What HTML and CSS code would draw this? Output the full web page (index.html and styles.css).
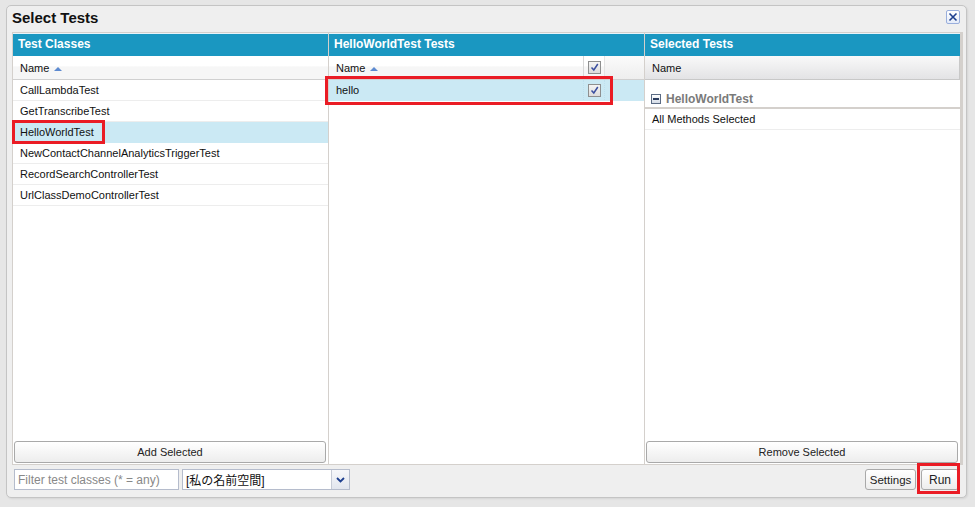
FILE: index.html
```html
<!DOCTYPE html>
<html>
<head>
<meta charset="utf-8">
<link rel="stylesheet" href="styles.css">
</head>
<body>
<div class="dialog">
  <div class="titlebar">
    <span class="title">Select Tests</span>
    <span class="close"><svg width="10" height="10" viewBox="0 0 10 10"><path d="M1.5 1.5 L8.5 8.5 M8.5 1.5 L1.5 8.5" stroke="#1d3f8f" stroke-width="1.6" fill="none"/></svg></span>
  </div>
  <div class="panels">
    <div class="panel">
      <div class="phead">Test Classes</div>
      <div class="colhead plain"><span class="colname">Name <span class="sort"></span></span></div>
      <div class="rows">
        <div class="row">CallLambdaTest</div>
        <div class="row">GetTranscribeTest</div>
        <div class="row sel">HelloWorldTest</div>
        <div class="row">NewContactChannelAnalyticsTriggerTest</div>
        <div class="row">RecordSearchControllerTest</div>
        <div class="row">UrlClassDemoControllerTest</div>
      </div>
      <div class="pfoot"><button class="btn wide">Add Selected</button></div>
    </div>
    <div class="panel">
      <div class="phead">HelloWorldTest Tests</div>
      <div class="colhead plain split">
        <span class="colname grow">Name <span class="sort"></span></span>
        <span class="chkcol"><span class="chk"><svg width="9" height="9" viewBox="0 0 9 9"><path d="M1.5 4.5 L3.8 7 L7.8 1" stroke="#3a4fa0" stroke-width="1.5" fill="none"/></svg></span></span>
        <span class="filler"></span>
      </div>
      <div class="rows">
        <div class="row sel split"><span class="grow">hello</span><span class="chkcol"><span class="chk"><svg width="9" height="9" viewBox="0 0 9 9"><path d="M1.5 4.5 L3.8 7 L7.8 1" stroke="#3a4fa0" stroke-width="1.5" fill="none"/></svg></span></span><span class="filler sel"></span></div>
      </div>
    </div>
    <div class="panel">
      <div class="phead">Selected Tests</div>
      <div class="colhead grad"><span class="colname">Name</span></div>
      <div class="rows">
        <div class="group"><span class="minus"></span>HelloWorldTest</div>
        <div class="row">All Methods Selected</div>
      </div>
      <div class="pfoot"><button class="btn wide">Remove Selected</button></div>
    </div>
  </div>
  <div class="toolbar">
    <input class="filter" type="text" placeholder="Filter test classes (* = any)">
    <div class="combo"><span class="combotext">[私の名前空間]</span><span class="trigger"><svg width="9" height="6" viewBox="0 0 9 6"><path d="M1 1 L4.5 4.5 L8 1" stroke="#1d3f8f" stroke-width="1.8" fill="none"/></svg></span></div>
    <span class="spacer"></span>
    <button class="btn small settings">Settings</button>
    <button class="btn small run">Run</button>
  </div>
</div>
<div class="mark m1"></div>
<div class="mark m2"></div>
<div class="mark m3"></div>
</body>
</html>
```
FILE: styles.css
```css
html, body { margin: 0; padding: 0; }
body {
  background: #e6e6e6;
  font-family: "Liberation Sans", Arial, "Noto Sans CJK JP", sans-serif;
  font-size: 11px;
  color: #111;
  width: 975px;
  height: 507px;
  position: relative;
  overflow: hidden;
}
.dialog {
  position: absolute;
  left: 6px;
  top: 5px;
  width: 959px;
  height: 491px;
  border: 1px solid #c4c4c4;
  border-radius: 5px;
  background: #efefef;
  box-shadow: 1px 1px 2px rgba(0,0,0,0.08);
  display: flex;
  flex-direction: column;
}
.titlebar {
  height: 26px;
  box-sizing: border-box;
  display: flex;
  align-items: flex-start;
  padding: 3px 6px 0 5px;
}
.title {
  flex: 1;
  font-weight: bold;
  font-size: 15px;
  line-height: 18px;
  color: #111;
}
.close {
  width: 12px;
  height: 12px;
  border: 1px solid #99aedc;
  border-radius: 2px;
  background: linear-gradient(#ffffff, #e4ebf8);
  display: flex;
  align-items: center;
  justify-content: center;
  margin-top: 1px;
}
.panels {
  margin-left: 5px;
  width: 951px;
  height: 433px;
  box-sizing: border-box;
  background: #d4d0cc;
  padding: 1px 3px 1px 1px;
  display: flex;
  gap: 1px;
}
.panel {
  width: 315px;
  background: #fff;
  display: flex;
  flex-direction: column;
}
.phead {
  height: 23px;
  background: #1a97c1;
  border-top: 1px solid #e8f4fa;
  box-sizing: border-box;
  color: #fff;
  font-weight: bold;
  font-size: 12px;
  line-height: 21px;
  padding-left: 5px;
}
.colhead {
  height: 24px;
  box-sizing: border-box;
  border-bottom: 1px solid #d0d0d0;
  display: flex;
  align-items: center;
  padding-left: 7px;
}
.colhead.plain { background: linear-gradient(#ffffff 0%, #ffffff 45%, #f6f6f6 46%, #f6f6f6 100%); }
.colhead.grad {
  background: linear-gradient(#f9f9f9, #e3e3e5);
  border-bottom: 1px solid #c8c8c8;
  border-right: 1px solid #c8c8c8;
}
.sort {
  display: inline-block;
  width: 0; height: 0;
  border-left: 4px solid transparent;
  border-right: 4px solid transparent;
  border-bottom: 4px solid #5d8ad0;
  margin-left: 2px;
  vertical-align: 1px;
}
.split { padding-right: 0; }
.grow { flex: 1; }
.chkcol {
  width: 20px;
  height: 100%;
  border-left: 1px solid #d8d8d8;
  display: flex;
  align-items: center;
  justify-content: center;
}
.filler {
  width: 40px;
  height: 100%;
  box-sizing: border-box;
  border-left: 1px solid #e4e4e4;
  background: linear-gradient(#fbfbfb, #eeeeee);
}
.filler.sel { background: #cbe9f4; border-left: 1px dotted #bfe0ee; }
.chk {
  width: 11px;
  height: 11px;
  border: 1px solid #8e8f8f;
  background: linear-gradient(#f4f4f4, #dcdcdc);
  display: flex;
  align-items: center;
  justify-content: center;
}
.rows { flex: 1; }
.row {
  height: 21px;
  box-sizing: border-box;
  border-bottom: 1px solid #ededed;
  line-height: 20px;
  padding-left: 7px;
  display: flex;
  align-items: center;
}
.row.sel { background: #cbe9f4; border-bottom-color: #cbe9f4; }
.row.sel .chkcol { border-left: 1px dotted #bfe0ee; }
.group {
  height: 29px;
  box-sizing: border-box;
  border-bottom: 2px solid #d4d0cc;
  padding: 10px 0 0 6px;
  font-weight: bold;
  font-size: 12px;
  color: #7a7a7a;
  display: flex;
  align-items: center;
}
.minus {
  width: 8px;
  height: 8px;
  border: 1px solid #5b6b84;
  background: linear-gradient(#ffffff, #d4dbe6);
  margin-right: 5px;
  position: relative;
}
.minus::after {
  content: "";
  position: absolute;
  left: 1px; right: 1px; top: 3px;
  height: 2px;
  background: #2b3c5e;
}
.pfoot {
  padding: 1px 0 0 1px;
  height: 24px;
  box-sizing: border-box;
}
.btn {
  font-family: "Liberation Sans", Arial, sans-serif;
  font-size: 11px;
  color: #222;
  border: 1px solid #a9a9a9;
  border-radius: 3px;
  background: linear-gradient(#ffffff, #ededed);
  padding: 0;
  margin: 0;
}
.btn.wide { width: 312px; height: 22px; }
.toolbar {
  flex: 1;
  display: flex;
  align-items: center;
  padding: 0 7px 3px 7px;
  gap: 3px;
}
.filter {
  width: 165px;
  height: 21px;
  box-sizing: border-box;
  border: 1px solid #b5bccc;
  font-family: "Liberation Sans", Arial, sans-serif;
  font-size: 12px;
  padding: 0 3px;
  margin: 0;
  background: #fff;
}
.filter::placeholder { color: #888; }
.combo {
  width: 168px;
  height: 21px;
  box-sizing: border-box;
  border: 1px solid #b5bccc;
  background: #fff;
  display: flex;
  align-items: center;
}
.combotext {
  flex: 1;
  padding-left: 3px;
  font-size: 12px;
  font-family: "Liberation Sans", Arial, "Noto Sans CJK JP", sans-serif;
  color: #111;
}
.trigger {
  width: 17px;
  height: 19px;
  border-left: 1px solid #c6cbd6;
  background: linear-gradient(#f6f7fa, #e2e6ee);
  display: flex;
  align-items: center;
  justify-content: center;
}
.spacer { flex: 1; }
.btn.small { height: 21px; font-size: 12px; }
.btn.settings { width: 51px; font-size: 11.5px; }
.btn.run { width: 38px; margin-left: 2px; }
.mark {
  position: absolute;
  border: 3px solid #ea1c25;
  box-sizing: border-box;
}
.m1 { left: 12px; top: 120px; width: 93px; height: 24px; }
.m2 { left: 325px; top: 76px; width: 288px; height: 29px; }
.m3 { left: 917px; top: 463px; width: 43px; height: 31px; }
```
